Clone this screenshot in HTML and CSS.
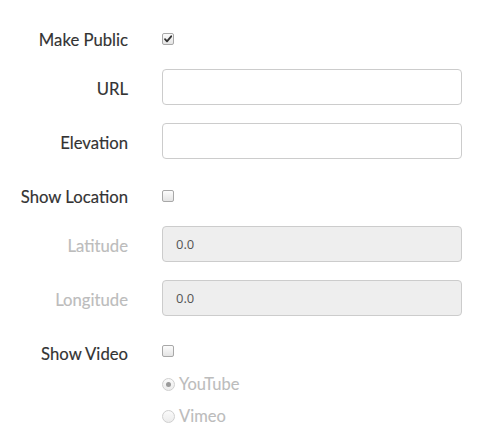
FILE: index.html
```html
<!DOCTYPE html>
<html>
<head>
<meta charset="utf-8">
<link rel="stylesheet" href="styles.css">
</head>
<body>
<form class="form">
  <div class="row check-row">
    <label class="label">Make Public</label>
    <div class="control">
      <span class="box checked"><svg width="10" height="10" viewBox="0 0 10 10"><path d="M2 5.2 L4 7.3 L8.2 2.3" fill="none" stroke="#333" stroke-width="1.8" stroke-linecap="round" stroke-linejoin="round"/></svg></span>
    </div>
  </div>
  <div class="row">
    <label class="label">URL</label>
    <div class="control"><input class="input" type="text"></div>
  </div>
  <div class="row">
    <label class="label">Elevation</label>
    <div class="control"><input class="input" type="text"></div>
  </div>
  <div class="row check-row">
    <label class="label">Show Location</label>
    <div class="control"><span class="box"></span></div>
  </div>
  <div class="row">
    <label class="label disabled">Latitude</label>
    <div class="control"><input class="input" type="text" value="0.0" disabled></div>
  </div>
  <div class="row">
    <label class="label disabled">Longitude</label>
    <div class="control"><input class="input" type="text" value="0.0" disabled></div>
  </div>
  <div class="row check-row video-row">
    <label class="label">Show Video</label>
    <div class="control">
      <span class="box"></span>
      <div class="radios">
        <div class="radio-line"><span class="radio on"></span><span class="radio-text">YouTube</span></div>
        <div class="radio-line"><span class="radio"></span><span class="radio-text">Vimeo</span></div>
      </div>
    </div>
  </div>
</form>
</body>
</html>
```
FILE: styles.css
```css
html, body {
  margin: 0;
  padding: 0;
  background: #fff;
}
body {
  font-family: Lato, "Open Sans", sans-serif;
  color: #333;
}
.form {
  padding-top: 20px;
}
.row {
  display: grid;
  grid-template-columns: 128px 300px;
  column-gap: 34px;
  margin-bottom: 18px;
  align-items: center;
}
.label {
  text-align: right;
  font-size: 16.7px;
  line-height: 20px;
  padding-top: 3px;
  color: #333;
  white-space: nowrap;
  -webkit-text-stroke: 0.15px #333;
}
.label.disabled {
  color: #bcbcbc;
  -webkit-text-stroke: 0.15px #bcbcbc;
}
.check-row {
  align-items: start;
  min-height: 31px;
}
.check-row .label {
  padding-top: 10px;
}
.check-row .control {
  padding-top: 13px;
}
.control {
  display: flex;
  flex-direction: column;
}
.input {
  box-sizing: border-box;
  width: 300px;
  height: 36px;
  border: 1px solid #cccccc;
  border-radius: 4px;
  padding: 0 13px;
  font-family: "Open Sans", sans-serif;
  font-size: 13px;
  color: #555;
  background: #fff;
  margin: 0;
  outline: none;
}
.input:disabled {
  background: #eeeeee;
  color: #555;
  -webkit-text-fill-color: #555;
  opacity: 1;
}
.box {
  box-sizing: border-box;
  width: 12px;
  height: 12px;
  border: 1px solid #a8a8a8;
  border-radius: 2px;
  background: linear-gradient(#fcfcfc, #e4e4e4);
  display: flex;
  align-items: center;
  justify-content: center;
}
.box svg {
  display: block;
}
.video-row .control {
  padding-top: 11px;
}
.radios {
  display: flex;
  flex-direction: column;
  margin-top: 11px;
}
.radio-line {
  display: flex;
  align-items: center;
  height: 32px;
  gap: 4px;
}
.radio {
  box-sizing: border-box;
  width: 13px;
  height: 13px;
  border-radius: 50%;
  border: 1px solid #cfcfcf;
  background: linear-gradient(#fafafa, #ececec);
  display: flex;
  align-items: center;
  justify-content: center;
}
.radio.on::after {
  content: "";
  width: 5px;
  height: 5px;
  border-radius: 50%;
  background: #9a9a9a;
}
.radio-text {
  font-size: 16.5px;
  color: #bcbcbc;
  line-height: 20px;
  -webkit-text-stroke: 0.1px #bcbcbc;
}
```
